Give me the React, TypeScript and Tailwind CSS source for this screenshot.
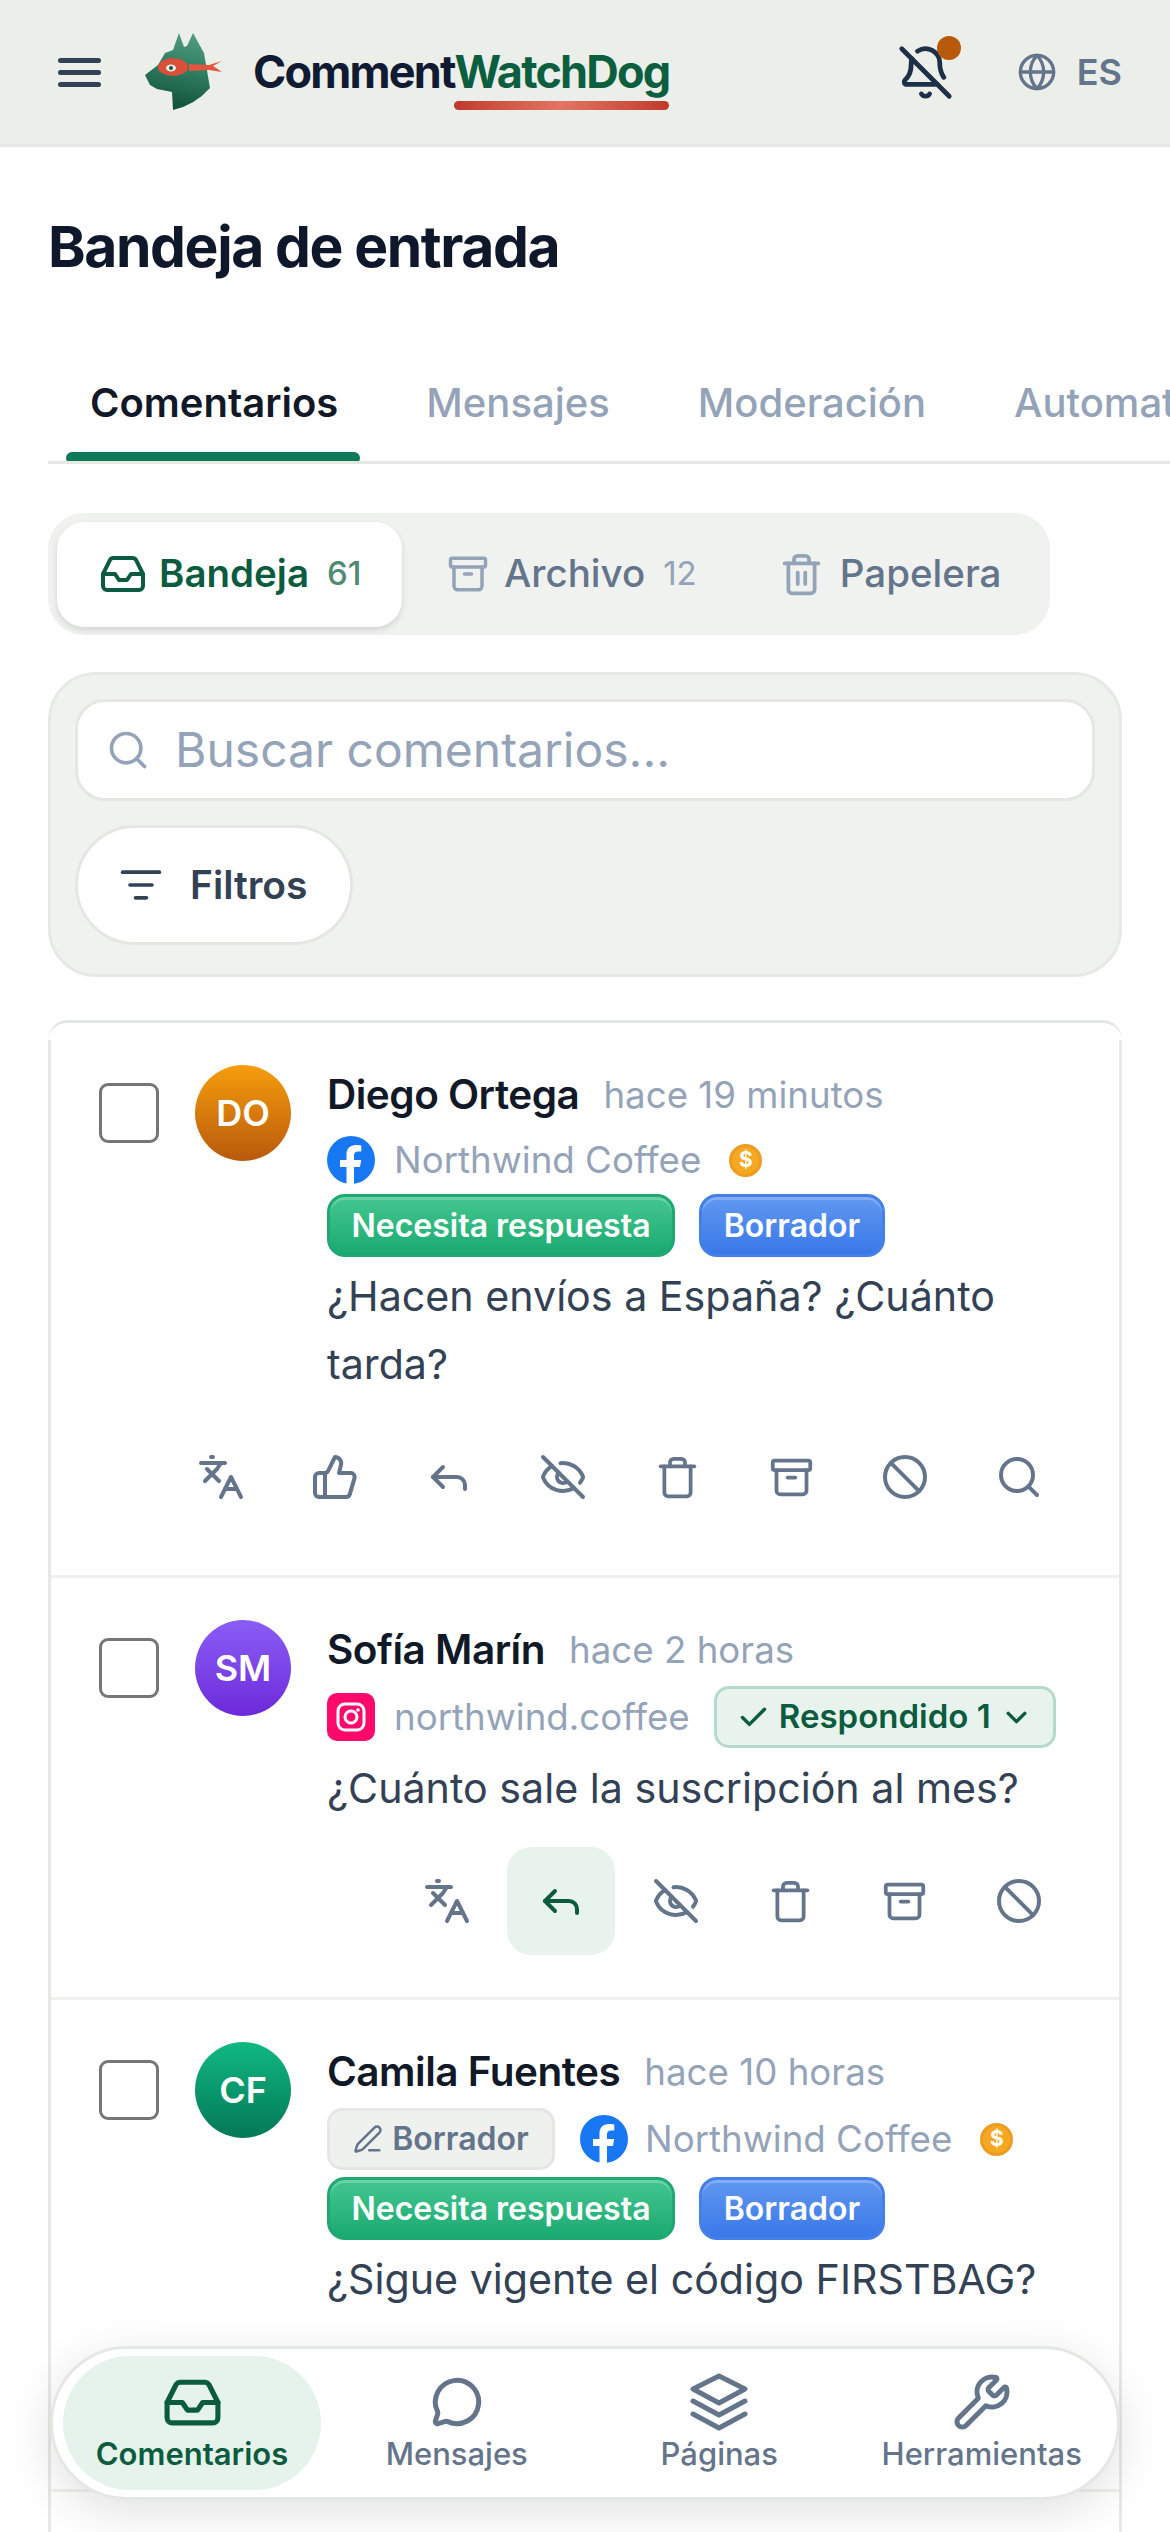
import type { ReactNode } from "react";
import {
  Archive,
  Ban,
  BellOff,
  Check,
  ChevronDown,
  EyeOff,
  Globe,
  Inbox,
  Languages,
  ListFilter,
  MessageCircle,
  PenLine,
  Reply,
  Search,
  ThumbsUp,
  Trash,
  Trash2,
  Wrench,
} from "lucide-react";

function DogLogo() {
  return (
    <svg width="78" height="78" viewBox="0 0 78 78" className="shrink-0">
      <defs>
        <linearGradient id="dogFill" x1="0.6" y1="0" x2="0.4" y2="1">
          <stop offset="0" stopColor="#4f9c80" />
          <stop offset="0.5" stopColor="#2d7a5e" />
          <stop offset="1" stopColor="#0f4f38" />
        </linearGradient>
      </defs>
      <path
        d="M28 17 L34 0 L39 14 L42 13 L48 0 L59 20 L65 55 Q50 72 28 77 L27 59 L12 56 L5 52 L0 42 L13 32 L20 20 Z"
        fill="url(#dogFill)"
      />
      <path d="M44 31 L64 32 L77 28 L68 33 L77 39 L64 37 L44 38 Z" fill="#e2563f" />
      <ellipse cx="28" cy="34" rx="15" ry="9" fill="#d94f3a" />
      <ellipse cx="26" cy="35" rx="5" ry="3.5" fill="#e8f0ea" />
      <circle cx="26" cy="35" r="2" fill="#1f4f3d" />
    </svg>
  );
}

function FacebookIcon() {
  return (
    <svg width="48" height="48" viewBox="0 0 48 48" className="shrink-0">
      <circle cx="24" cy="24" r="24" fill="#1877f2" />
      <path
        d="M33 31l1.2-7H27v-4.6c0-2 1-3.8 4-3.8h3.3V9.6S31.500 9 28.800 9C23.100 9 19.500 12.400 19.500 18.500V24H13v7h6.500v17a24 24 0 0 0 7.500 0V31z"
        fill="#fff"
      />
    </svg>
  );
}

function InstagramIcon() {
  return (
    <svg width="48" height="48" viewBox="0 0 48 48" className="shrink-0">
      <rect width="48" height="48" rx="10" fill="#ff0a6c" />
      <rect x="11" y="11" width="26" height="26" rx="7" fill="none" stroke="#fff" strokeWidth="3" />
      <circle cx="24" cy="24" r="6" fill="none" stroke="#fff" strokeWidth="3" />
      <circle cx="31" cy="17" r="1.800" fill="#fff" />
    </svg>
  );
}

function LayersIcon() {
  return (
    <svg
      width="60"
      height="60"
      viewBox="0 0 60 60"
      fill="none"
      stroke="currentColor"
      strokeWidth="5"
      strokeLinecap="round"
      strokeLinejoin="round"
    >
      <path d="M30 4 L56 17 L30 31 L4 17 Z" />
      <path d="M4 29 L30 43 L56 29" />
      <path d="M4 42 L30 56 L56 42" />
    </svg>
  );
}

function Coin() {
  return (
    <span className="flex h-[33px] w-[33px] shrink-0 items-center justify-center rounded-full border-[3px] border-[#ee9c1f] bg-[#f7a823] text-[21px] font-bold text-white">
      $
    </span>
  );
}

function StatusBadges({ className }: { className: string }) {
  return (
    <div className={`flex gap-[24px] ${className}`}>
      <span className="flex h-[63px] w-[348px] items-center justify-center rounded-[18px] border-[3px] border-[#1fa872] bg-linear-to-b from-[#42c68f] to-[#18aa72] text-[32px] font-semibold text-white shadow-[inset_0_3px_0_rgba(255,255,255,0.22)]">
        Necesita respuesta
      </span>
      <span className="flex h-[63px] w-[186px] items-center justify-center rounded-[18px] border-[3px] border-[#4580ea] bg-linear-to-b from-[#6097f0] to-[#3a78e8] text-[32px] font-semibold text-white shadow-[inset_0_3px_0_rgba(255,255,255,0.22)]">
        Borrador
      </span>
    </div>
  );
}

function ActionButton({ children, active }: { children: ReactNode; active?: boolean }) {
  return (
    <span
      className={`flex h-[108px] w-[108px] items-center justify-center rounded-[24px] ${
        active ? "bg-[#e8f3ed] text-[#0b5c3f]" : "text-[#64748b]"
      }`}
    >
      {children}
    </span>
  );
}

function Row({
  initials,
  avatarClass,
  name,
  time,
  meta,
  text,
  textClass,
  actions,
  paddingClass,
}: {
  initials: string;
  avatarClass: string;
  name: string;
  time: string;
  meta: ReactNode;
  text: ReactNode;
  textClass: string;
  actions: ReactNode;
  paddingClass: string;
}) {
  return (
    <div className={`border-b-[3px] border-[#f0f1ef] pr-[46px] pl-[48px] ${paddingClass}`}>
      <div className="flex">
        <span className="mt-[18px] h-[60px] w-[60px] shrink-0 rounded-[9px] border-[3px] border-[#767676] bg-white" />
        <span
          className={`ml-[36px] flex h-[96px] w-[96px] shrink-0 items-center justify-center rounded-full text-[36px] font-semibold text-white ${avatarClass}`}
        >
          {initials}
        </span>
        <div className="ml-[36px] min-w-0 flex-1">
          <div className="flex h-[60px] items-center gap-[24px]">
            <span className="text-[40.500px] font-semibold tracking-[-0.5px] text-[#111827]">{name}</span>
            <span className="text-[36.700px] text-[#94a3b8]">{time}</span>
          </div>
          {meta}
          <div className={`text-[41.200px] leading-[68px] text-[#334155] ${textClass}`}>{text}</div>
        </div>
      </div>
      {actions}
    </div>
  );
}

const iconProps = { size: 48, strokeWidth: 2 };
const wideIconProps = { size: 45, strokeWidth: 2 };

export default function App() {
  return (
    <div className="relative h-[2532px] w-[1170px] overflow-hidden bg-white font-['Inter',sans-serif]">
      <header className="flex h-[147px] items-center border-b-[3px] border-[#e5e7e3] bg-[#eceee9]">
        <div className="ml-[58px] flex w-[43px] flex-col gap-[7px]">
          <span className="h-[5px] rounded-full bg-[#334155]" />
          <span className="h-[5px] rounded-full bg-[#334155]" />
          <span className="h-[5px] rounded-full bg-[#334155]" />
        </div>
        <div className="ml-[44px]">
          <DogLogo />
        </div>
        <div className="relative ml-[30px] text-[45px] leading-[60px] font-bold tracking-[-1.800px] text-[#111a33]">
          Comment<span className="text-[#0b5f3f]">WatchDog</span>
          <span className="absolute right-0 bottom-[-8px] h-[9px] w-[215px] rounded-full bg-linear-to-r from-[#c0392b] via-[#e27464] to-[#c0392b]" />
        </div>
        <div className="relative ml-auto">
          <BellOff size={57} strokeWidth={2} className="text-[#1e2f4a]" />
          <span className="absolute top-[-8px] left-[40px] h-[24px] w-[24px] rounded-full bg-[#b9590c]" />
        </div>
        <Globe size={40} strokeWidth={2} className="ml-[63px] text-[#64748b]" />
        <span className="mr-[48px] ml-[20px] text-[36px] font-semibold text-[#64748b]">ES</span>
      </header>

      <main className="pl-[48px]">
        <h1 className="mt-[64px] text-[57px] leading-[72px] font-bold tracking-[-1.400px] text-[#0f172a]">
          Bandeja de entrada
        </h1>

        <div className="relative mt-[87px] flex h-[94px] gap-[88px] overflow-hidden border-b-[3px] border-[#e5e7e3] pt-[8px] pl-[42px] text-[40px] leading-[50px] font-medium whitespace-nowrap text-[#94a3b8]">
          <span className="font-semibold text-[#111827]">Comentarios</span>
          <span>Mensajes</span>
          <span>Moderación</span>
          <span>Automatizaciones</span>
          <span className="absolute bottom-[-3px] left-[18px] h-[12px] w-[294px] rounded-full bg-[#0f7a58]" />
        </div>

        <div className="mt-[49px] flex h-[122px] w-[1002px] items-center rounded-[36px] bg-[#eff2ee] pl-[9px] text-[38.500px] font-medium text-[#64748b]">
          <div className="flex h-[105px] w-[345px] items-center rounded-[27px] bg-white pl-[42px] shadow-[0_3px_6px_rgba(0,0,0,0.12)]">
            <Inbox {...iconProps} className="text-[#0b5c3f]" />
            <span className="ml-[12px] font-semibold text-[#0b5c3f]">Bandeja</span>
            <span className="ml-[18px] text-[33px] text-[#4f8a72]">61</span>
          </div>
          <Archive size={42} strokeWidth={2} className="ml-[45px] text-[#94a3b8]" />
          <span className="ml-[15px]">Archivo</span>
          <span className="ml-[18px] text-[33px] font-normal text-[#94a3b8]">12</span>
          <Trash2 size={45} strokeWidth={2} className="ml-[82px] text-[#94a3b8]" />
          <span className="ml-[16px]">Papelera</span>
        </div>

        <div className="mt-[37px] h-[305px] w-[1074px] rounded-[48px] border-[3px] border-[#e6e9e4] bg-[#eff2ee] px-[24px] pt-[24px]">
          <div className="flex h-[102px] items-center rounded-[30px] border-[3px] border-[#e5e7e3] bg-white pl-[28px] text-[48px] text-[#94a3b8]">
            <Search size={44} strokeWidth={2} />
            <span className="ml-[25px]">Buscar comentarios...</span>
          </div>
          <div className="mt-[24px] flex h-[120px] w-[278px] items-center rounded-full border-[3px] border-[#e5e7e3] bg-white pl-[41px] text-[39px] font-semibold text-[#334155]">
            <ListFilter size={44} strokeWidth={2} />
            <span className="ml-[27px]">Filtros</span>
          </div>
        </div>

        <div className="mt-[43px] w-[1074px]">
          {/* top edge tapers off into the corners, the sides start lower down */}
          <div className="h-[20px] rounded-t-[36px] border-t-[3px] border-[#e5e7e3]" />
          <div className="border-x-[3px] border-[#e8e9e6]">
            <Row
              paddingClass="pt-[25px] pb-[44px]"
              initials="DO"
              avatarClass="bg-linear-to-b from-[#f59e0b] to-[#b9590c]"
              name="Diego Ortega"
              time="hace 19 minutos"
              meta={
                <>
                  <div className="mt-[11px] flex h-[48px] items-center">
                    <FacebookIcon />
                    <span className="ml-[19px] text-[36.700px] text-[#94a3b8]">Northwind Coffee</span>
                    <span className="ml-[28px]">
                      <Coin />
                    </span>
                  </div>
                  <StatusBadges className="mt-[10px]" />
                </>
              }
              textClass="mt-[5px]"
              text={
                <>
                  ¿Hacen envíos a España? ¿Cuánto
                  <br />
                  tarda?
                </>
              }
              actions={
                <div className="mt-[25px] flex justify-end gap-[6px]">
                  <ActionButton><Languages {...iconProps} /></ActionButton>
                  <ActionButton><ThumbsUp {...iconProps} /></ActionButton>
                  <ActionButton><Reply {...iconProps} /></ActionButton>
                  <ActionButton><EyeOff {...iconProps} /></ActionButton>
                  <ActionButton><Trash {...wideIconProps} /></ActionButton>
                  <ActionButton><Archive {...wideIconProps} /></ActionButton>
                  <ActionButton><Ban {...iconProps} /></ActionButton>
                  <ActionButton><Search {...iconProps} /></ActionButton>
                </div>
              }
            />
            <Row
              paddingClass="pt-[42px] pb-[42px]"
              initials="SM"
              avatarClass="bg-linear-to-b from-[#8b5cf6] to-[#6d28d9]"
              name="Sofía Marín"
              time="hace 2 horas"
              meta={
                <div className="mt-[6px] flex h-[62px] items-center">
                  <InstagramIcon />
                  <span className="ml-[19px] text-[36.700px] text-[#94a3b8]">northwind.coffee</span>
                  <span className="ml-[24px] flex h-[62px] w-[342px] items-center justify-center gap-[9px] rounded-[15px] border-[3px] border-[#b5dac9] bg-[#e8f3ed] text-[33px] font-semibold text-[#0b5c3f]">
                    <Check size={33} strokeWidth={2.500} />
                    Respondido 1
                    <ChevronDown size={33} strokeWidth={2.500} />
                  </span>
                </div>
              }
              textClass="mt-[6px]"
              text="¿Cuánto sale la suscripción al mes?"
              actions={
                <div className="mt-[25px] flex justify-end gap-[6.500px]">
                  <ActionButton><Languages {...iconProps} /></ActionButton>
                  <ActionButton active><Reply {...iconProps} /></ActionButton>
                  <ActionButton><EyeOff {...iconProps} /></ActionButton>
                  <ActionButton><Trash {...wideIconProps} /></ActionButton>
                  <ActionButton><Archive {...wideIconProps} /></ActionButton>
                  <ActionButton><Ban {...iconProps} /></ActionButton>
                </div>
              }
            />
            <Row
              paddingClass="pt-[42px] pb-[42px]"
              initials="CF"
              avatarClass="bg-linear-to-b from-[#10b981] to-[#047857]"
              name="Camila Fuentes"
              time="hace 10 horas"
              meta={
                <>
                  <div className="mt-[6px] flex h-[62px] items-center">
                    <span className="flex h-[62px] w-[228px] items-center justify-center gap-[9px] rounded-[15px] border-[3px] border-[#e5e7e3] bg-[#eef1ed] text-[32px] font-semibold text-[#64748b]">
                      <PenLine size={30} strokeWidth={2} />
                      Borrador
                    </span>
                    <span className="ml-[25px]">
                      <FacebookIcon />
                    </span>
                    <span className="ml-[17px] text-[36.700px] text-[#94a3b8]">Northwind Coffee</span>
                    <span className="ml-[28px]">
                      <Coin />
                    </span>
                  </div>
                  <StatusBadges className="mt-[7px]" />
                </>
              }
              textClass="mt-[5px]"
              text="¿Sigue vigente el código FIRSTBAG?"
              actions={
                <div className="mt-[26px] flex justify-end gap-[6px]">
                  <ActionButton><Languages {...iconProps} /></ActionButton>
                  <ActionButton><Reply {...iconProps} /></ActionButton>
                  <ActionButton><EyeOff {...iconProps} /></ActionButton>
                </div>
              }
            />
            <div className="h-[60px]" />
          </div>
        </div>
      </main>

      <nav className="absolute top-[2346px] left-[50px] grid h-[154px] w-[1070px] grid-cols-4 items-center rounded-full border-[3px] border-[#e5e7e3] bg-white pr-[4px] pl-[10px] text-[31px] font-medium text-[#64748b] shadow-[0_12px_48px_rgba(0,0,0,0.12)]">
        <div className="flex h-[134px] w-[258px] flex-col items-center justify-center rounded-full bg-[#e6f3ec] font-semibold text-[#0b5c3f]">
          <span className="flex h-[60px] items-center">
            <Inbox size={61} strokeWidth={2} />
          </span>
          <span className="mt-[2px] leading-[40px]">Comentarios</span>
        </div>
        <div className="flex flex-col items-center">
          <span className="flex h-[60px] items-center">
            <MessageCircle size={52} strokeWidth={2.300} />
          </span>
          <span className="mt-[2px] leading-[40px]">Mensajes</span>
        </div>
        <div className="flex flex-col items-center">
          <LayersIcon />
          <span className="mt-[2px] leading-[40px]">Páginas</span>
        </div>
        <div className="flex flex-col items-center">
          <Wrench size={60} strokeWidth={2} />
          <span className="mt-[2px] leading-[40px]">Herramientas</span>
        </div>
      </nav>
    </div>
  );
}
